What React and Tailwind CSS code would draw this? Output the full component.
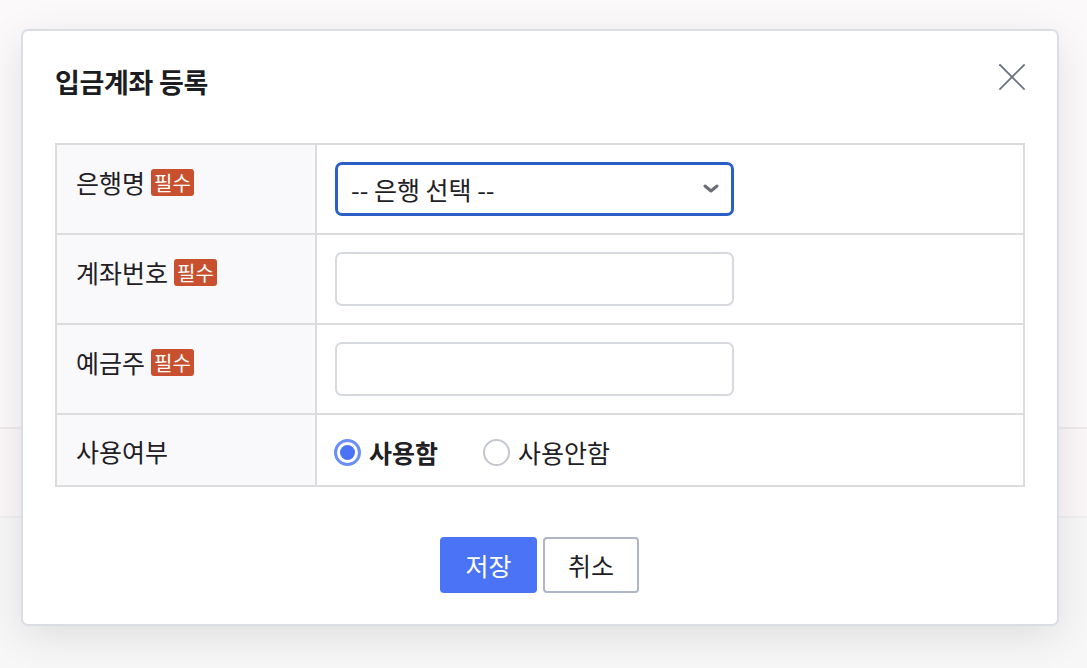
import React from "react";

const font = { fontFamily: '"Noto Sans CJK KR", "Noto Sans", sans-serif' };

function Badge() {
  return (
    <span className="ml-[6px] inline-flex h-[27px] items-center rounded-[3px] bg-[#c8502f] px-[3px] text-[20px] leading-none text-white">
      필수
    </span>
  );
}

function Label({ children, required }) {
  return (
    <div className="flex items-start border-r-2 border-[#dcdcdc] bg-[#f9f9fb] pl-[19px] pt-[24px] text-[25px] leading-none text-[#1f2024]">
      <div className="flex items-center">
        <span>{children}</span>
        {required && <Badge />}
      </div>
    </div>
  );
}

export default function App() {
  return (
    <div className="relative h-[668px] w-[1087px] overflow-hidden bg-[#fcf9fa]" style={font}>
      {/* background page */}
      <div className="flex h-full flex-col">
        <div className="h-[427px]" />
        <div className="h-[89px] border-t-2 border-[#efebec] bg-[#fbf7f8]" />
        <div className="flex-1 border-t-2 border-[#efefef] bg-[#f7f7f8]" />
      </div>

      {/* modal */}
      <div className="absolute left-[21px] top-[29px] flex h-[597px] w-[1038px] flex-col rounded-[7px] border-2 border-[#dadde3] bg-white px-[32px] shadow-[0_10px_40px_rgba(0,0,0,0.10)]">
        <div className="flex items-start justify-between pt-[34px]">
          <h2 className="pt-[3px] text-[27px] font-bold leading-none tracking-[-0.3px] text-[#1c1d22]">입금계좌 등록</h2>
          <button className="mt-[-1px] text-[#6b7280]">
            <svg width="26" height="26" viewBox="0 0 26 26" fill="none" stroke="currentColor" strokeWidth="1.8" strokeLinecap="square">
              <line x1="1" y1="1" x2="25" y2="25" />
              <line x1="25" y1="1" x2="1" y2="25" />
            </svg>
          </button>
        </div>

        <div className="mt-[48px] grid grid-cols-[260px_1fr] border-2 border-[#dcdcdc]">
          {/* row 1 */}
          <Label required>은행명</Label>
          <div className="flex h-[88px] items-center pl-[18px]">
            <div className="relative flex h-[54px] w-[399px] items-center rounded-[7px] border-[3px] border-[#2b5fc7] pl-[13px] text-[25px] leading-none text-[#1f2024]">
              -- 은행 선택 --
              <svg className="absolute right-[12px] top-[19px]" width="16" height="10" viewBox="0 0 16 10" fill="none" stroke="#6b6e76" strokeWidth="3" strokeLinecap="round" strokeLinejoin="round">
                <path d="M2 2l6 5 6-5" />
              </svg>
            </div>
          </div>

          {/* row 2 */}
          <div className="col-span-2 h-[2px] bg-[#dcdcdc]" />
          <Label required>계좌번호</Label>
          <div className="flex h-[88px] items-center pl-[18px]">
            <div className="h-[54px] w-[399px] rounded-[7px] border-2 border-[#d6d9de] bg-white" />
          </div>

          {/* row 3 */}
          <div className="col-span-2 h-[2px] bg-[#dcdcdc]" />
          <Label required>예금주</Label>
          <div className="flex h-[88px] items-center pl-[18px]">
            <div className="h-[54px] w-[399px] rounded-[7px] border-2 border-[#d6d9de] bg-white" />
          </div>

          {/* row 4 */}
          <div className="col-span-2 h-[2px] bg-[#dcdcdc]" />
          <Label>사용여부</Label>
          <div className="flex h-[70px] items-center pl-[17px] pt-[5px] text-[25px] leading-none text-[#1f2024]">
            <div className="flex items-center">
              <span className="flex h-[27px] w-[27px] items-center justify-center rounded-full border-[3px] border-[#6b8ef8] bg-white">
                <span className="h-[15px] w-[15px] rounded-full bg-[#4a74f5]" />
              </span>
              <span className="ml-[8px] font-bold">사용함</span>
            </div>
            <div className="ml-[45px] flex items-center">
              <span className="h-[27px] w-[27px] rounded-full border-2 border-[#c4c7d2] bg-white" />
              <span className="ml-[8px]">사용안함</span>
            </div>
          </div>
        </div>

        <div className="mt-[50px] flex justify-center gap-[6px] pr-[1px]">
          <button className="h-[56px] w-[97px] rounded-[4px] bg-[#4a74f5] text-[25px] leading-none text-white">저장</button>
          <button className="h-[56px] w-[96px] rounded-[4px] border-2 border-[#b1b6c6] bg-white text-[25px] leading-none text-[#1f2024]">취소</button>
        </div>
      </div>
    </div>
  );
}
